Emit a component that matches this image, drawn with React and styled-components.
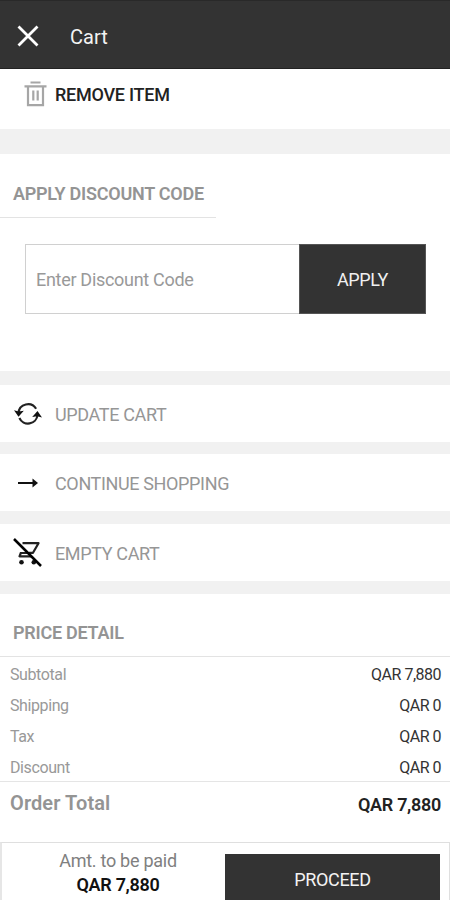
import React from "react";
import styled, { createGlobalStyle } from "styled-components";

const GlobalStyle = createGlobalStyle`
  * {
    box-sizing: border-box;
  }

  body {
    margin: 0;
    background-color: #ffffff;
    font-family: Roboto, sans-serif;
  }
`;

const Page = styled.div`
  display: flex;
  flex-direction: column;
  width: 450px;
  height: 900px;
  overflow: hidden;
  background-color: #ffffff;
`;

const Header = styled.header`
  display: flex;
  align-items: center;
  flex-shrink: 0;
  height: 69px;
  padding: 3px 0 0 17px;
  background-color: #333333;
  border-top: 1px solid #292929;
  border-bottom: 1px solid #222222;
`;

const HeaderTitle = styled.h1`
  margin: 1px 0 0 31px;
  color: #f3f3f3;
  font-size: 20px;
  font-weight: 400;
  line-height: 24px;
`;

const Divider = styled.div`
  flex-shrink: 0;
  height: ${(props) => props.$height}px;
  background-color: #f1f1f1;
`;

const ActionRow = styled.button`
  display: flex;
  align-items: center;
  flex-shrink: 0;
  height: ${(props) => props.$height}px;
  padding: 0 0 ${(props) => props.$lift || 0}px;
  border: none;
  background-color: #ffffff;
  cursor: pointer;
`;

const IconBox = styled.span`
  display: flex;
  width: 55px;
  padding-left: ${(props) => props.$inset}px;
`;

const ActionLabel = styled.span`
  padding-top: 1px;
  color: ${(props) => (props.$strong ? "#222222" : "#969696")};
  font-family: Roboto, sans-serif;
  font-size: 18px;
  font-weight: ${(props) => (props.$strong ? 500 : 400)};
  letter-spacing: ${(props) => (props.$strong ? -0.25 : -0.36)}px;
`;

const DiscountSection = styled.section`
  flex-shrink: 0;
  height: 217px;
`;

const SectionTitle = styled.h2`
  width: ${(props) => props.$width};
  height: ${(props) => props.$height}px;
  margin: 0;
  padding: ${(props) => props.$height - 35}px 0 0 13px;
  border-bottom: 1px solid #e3e3e3;
  color: #949494;
  font-size: 18px;
  font-weight: 600;
  letter-spacing: -0.25px;
  line-height: 22px;
`;

const DiscountForm = styled.div`
  display: flex;
  width: 401px;
  height: 70px;
  margin: 26px 0 0 25px;
`;

const DiscountInput = styled.input`
  width: 274px;
  padding: 0 0 0 10px;
  border: 1px solid #d0d0d0;
  border-right: none;
  outline: none;
  color: #333333;
  font-family: Roboto, sans-serif;
  font-size: 18px;
  letter-spacing: -0.3px;

  &::placeholder {
    color: #999999;
    opacity: 1;
  }
`;

const ApplyButton = styled.button`
  flex: 1;
  padding: 0;
  border: 1px solid #555555;
  background-color: #333333;
  color: #f0f0f0;
  font-family: Roboto, sans-serif;
  font-size: 18px;
  letter-spacing: -0.35px;
  cursor: pointer;
`;

const PriceList = styled.div`
  padding-top: 1px;
`;

const PriceRow = styled.div`
  display: flex;
  justify-content: space-between;
  align-items: center;
  height: 31px;
  padding: 1px 9px 0 10px;
`;

const PriceLabel = styled.span`
  color: #999999;
  font-size: 16px;
  letter-spacing: -0.4px;
`;

const PriceValue = styled.span`
  color: #333333;
  font-size: 16px;
  letter-spacing: -0.5px;
`;

const TotalRow = styled(PriceRow)`
  height: 42px;
  margin-top: -1px;
  border-top: 1px solid #e5e5e5;
`;

const TotalLabel = styled.span`
  color: #949494;
  font-size: 20px;
  font-weight: 600;
  letter-spacing: 0.1px;
`;

const TotalValue = styled.span`
  padding-top: 2px;
  color: #222222;
  font-size: 18px;
  font-weight: 600;
  letter-spacing: -0.3px;
`;

const Footer = styled.footer`
  display: flex;
  flex-shrink: 0;
  height: 58px;
  margin-top: auto;
  padding-right: 9px;
  border: 1px solid #dfdfdf;
  border-left-width: 2px;
  border-left-color: #e6e6e6;
  border-bottom: none;
`;

const Amount = styled.div`
  display: flex;
  flex-direction: column;
  align-items: center;
  width: 223px;
  padding: 6px 0 0 9px;
`;

const AmountLabel = styled.span`
  color: #808080;
  font-size: 18px;
  letter-spacing: -0.27px;
  line-height: 24px;
`;

const AmountValue = styled.span`
  color: #111111;
  font-size: 18px;
  font-weight: 600;
  letter-spacing: -0.3px;
  line-height: 24px;
`;

const ProceedButton = styled.button`
  flex: 1;
  height: 50px;
  margin-top: 11px;
  padding: 0;
  border: none;
  background-color: #333333;
  color: #f3f3f3;
  font-family: Roboto, sans-serif;
  font-size: 18px;
  letter-spacing: -0.35px;
  cursor: pointer;
`;

const CloseIcon = () => (
  <svg width="22" height="22" viewBox="0 0 22 22" fill="none" stroke="#ffffff" strokeWidth="2.8">
    <path d="M1.5 1.5l19 19M20.5 1.5l-19 19" />
  </svg>
);

const TrashIcon = () => (
  <svg width="23" height="26" viewBox="0 0 23 26" fill="none" stroke="#a6a6a6" strokeWidth="2.2">
    <path d="M6.5 1.5h10M0.5 5.3h22M4 5.3v18.8h15V5.3M9.3 9.5v10M13.7 9.5v10" />
  </svg>
);

const UpdateIcon = () => (
  <svg width="28" height="24" viewBox="0 0 28 24">
    <path
      d="M4.5 11A9.5 9.5 0 0 1 22.1 6.8M23.5 13A9.5 9.5 0 0 1 5.4 16"
      fill="none"
      stroke="#222222"
      strokeWidth="2.2"
    />
    <path d="M0 8.2l4.8 1.2 5-.7-5.3 6zM28 15.6l-4.8-1.4-5 .9 5.3-6z" fill="#111111" />
  </svg>
);

const ArrowIcon = () => (
  <svg width="20" height="10" viewBox="0 0 20 10">
    <path d="M0 5h16" stroke="#111111" strokeWidth="2" />
    <path d="M14.5 0.5L20 5l-5.5 4.5z" fill="#111111" />
  </svg>
);

const EmptyCartIcon = () => (
  <svg width="29" height="30" viewBox="0 0 29 30">
    <path
      d="M9.5 5.2h16L20 14.8h-4M8 14.5l-1.5 3.8h12M7.5 15h9"
      fill="none"
      stroke="#222222"
      strokeWidth="2.2"
      strokeLinejoin="round"
    />
    <circle cx="8.5" cy="24.2" r="2.3" fill="#111111" />
    <circle cx="20.8" cy="24.2" r="2.3" fill="#111111" />
    <path d="M1 1l27 27" stroke="#000000" strokeWidth="2.5" />
  </svg>
);

const prices = [
  { label: "Subtotal", value: "QAR 7,880" },
  { label: "Shipping", value: "QAR 0" },
  { label: "Tax", value: "QAR 0" },
  { label: "Discount", value: "QAR 0" },
];

const App = () => {
  return (
    <Page>
      <GlobalStyle />
      <Header>
        <CloseIcon />
        <HeaderTitle>Cart</HeaderTitle>
      </Header>

      <ActionRow $height={60} $lift={10}>
        <IconBox $inset={24}>
          <TrashIcon />
        </IconBox>
        <ActionLabel $strong>REMOVE ITEM</ActionLabel>
      </ActionRow>
      <Divider $height={25} />

      <DiscountSection>
        <SectionTitle $width="216px" $height={64}>APPLY DISCOUNT CODE</SectionTitle>
        <DiscountForm>
          <DiscountInput placeholder="Enter Discount Code" />
          <ApplyButton>APPLY</ApplyButton>
        </DiscountForm>
      </DiscountSection>
      <Divider $height={14} />

      <ActionRow $height={57}>
        <IconBox $inset={14}>
          <UpdateIcon />
        </IconBox>
        <ActionLabel>UPDATE CART</ActionLabel>
      </ActionRow>
      <Divider $height={12} />
      <ActionRow $height={57}>
        <IconBox $inset={18}>
          <ArrowIcon />
        </IconBox>
        <ActionLabel>CONTINUE SHOPPING</ActionLabel>
      </ActionRow>
      <Divider $height={13} />
      <ActionRow $height={57}>
        <IconBox $inset={13}>
          <EmptyCartIcon />
        </IconBox>
        <ActionLabel>EMPTY CART</ActionLabel>
      </ActionRow>
      <Divider $height={13} />

      <section>
        <SectionTitle $width="100%" $height={63}>PRICE DETAIL</SectionTitle>
        <PriceList>
          {prices.map((price) => (
            <PriceRow key={price.label}>
              <PriceLabel>{price.label}</PriceLabel>
              <PriceValue>{price.value}</PriceValue>
            </PriceRow>
          ))}
        </PriceList>
        <TotalRow>
          <TotalLabel>Order Total</TotalLabel>
          <TotalValue>QAR 7,880</TotalValue>
        </TotalRow>
      </section>

      <Footer>
        <Amount>
          <AmountLabel>Amt. to be paid</AmountLabel>
          <AmountValue>QAR 7,880</AmountValue>
        </Amount>
        <ProceedButton>PROCEED</ProceedButton>
      </Footer>
    </Page>
  );
};

export default App;
